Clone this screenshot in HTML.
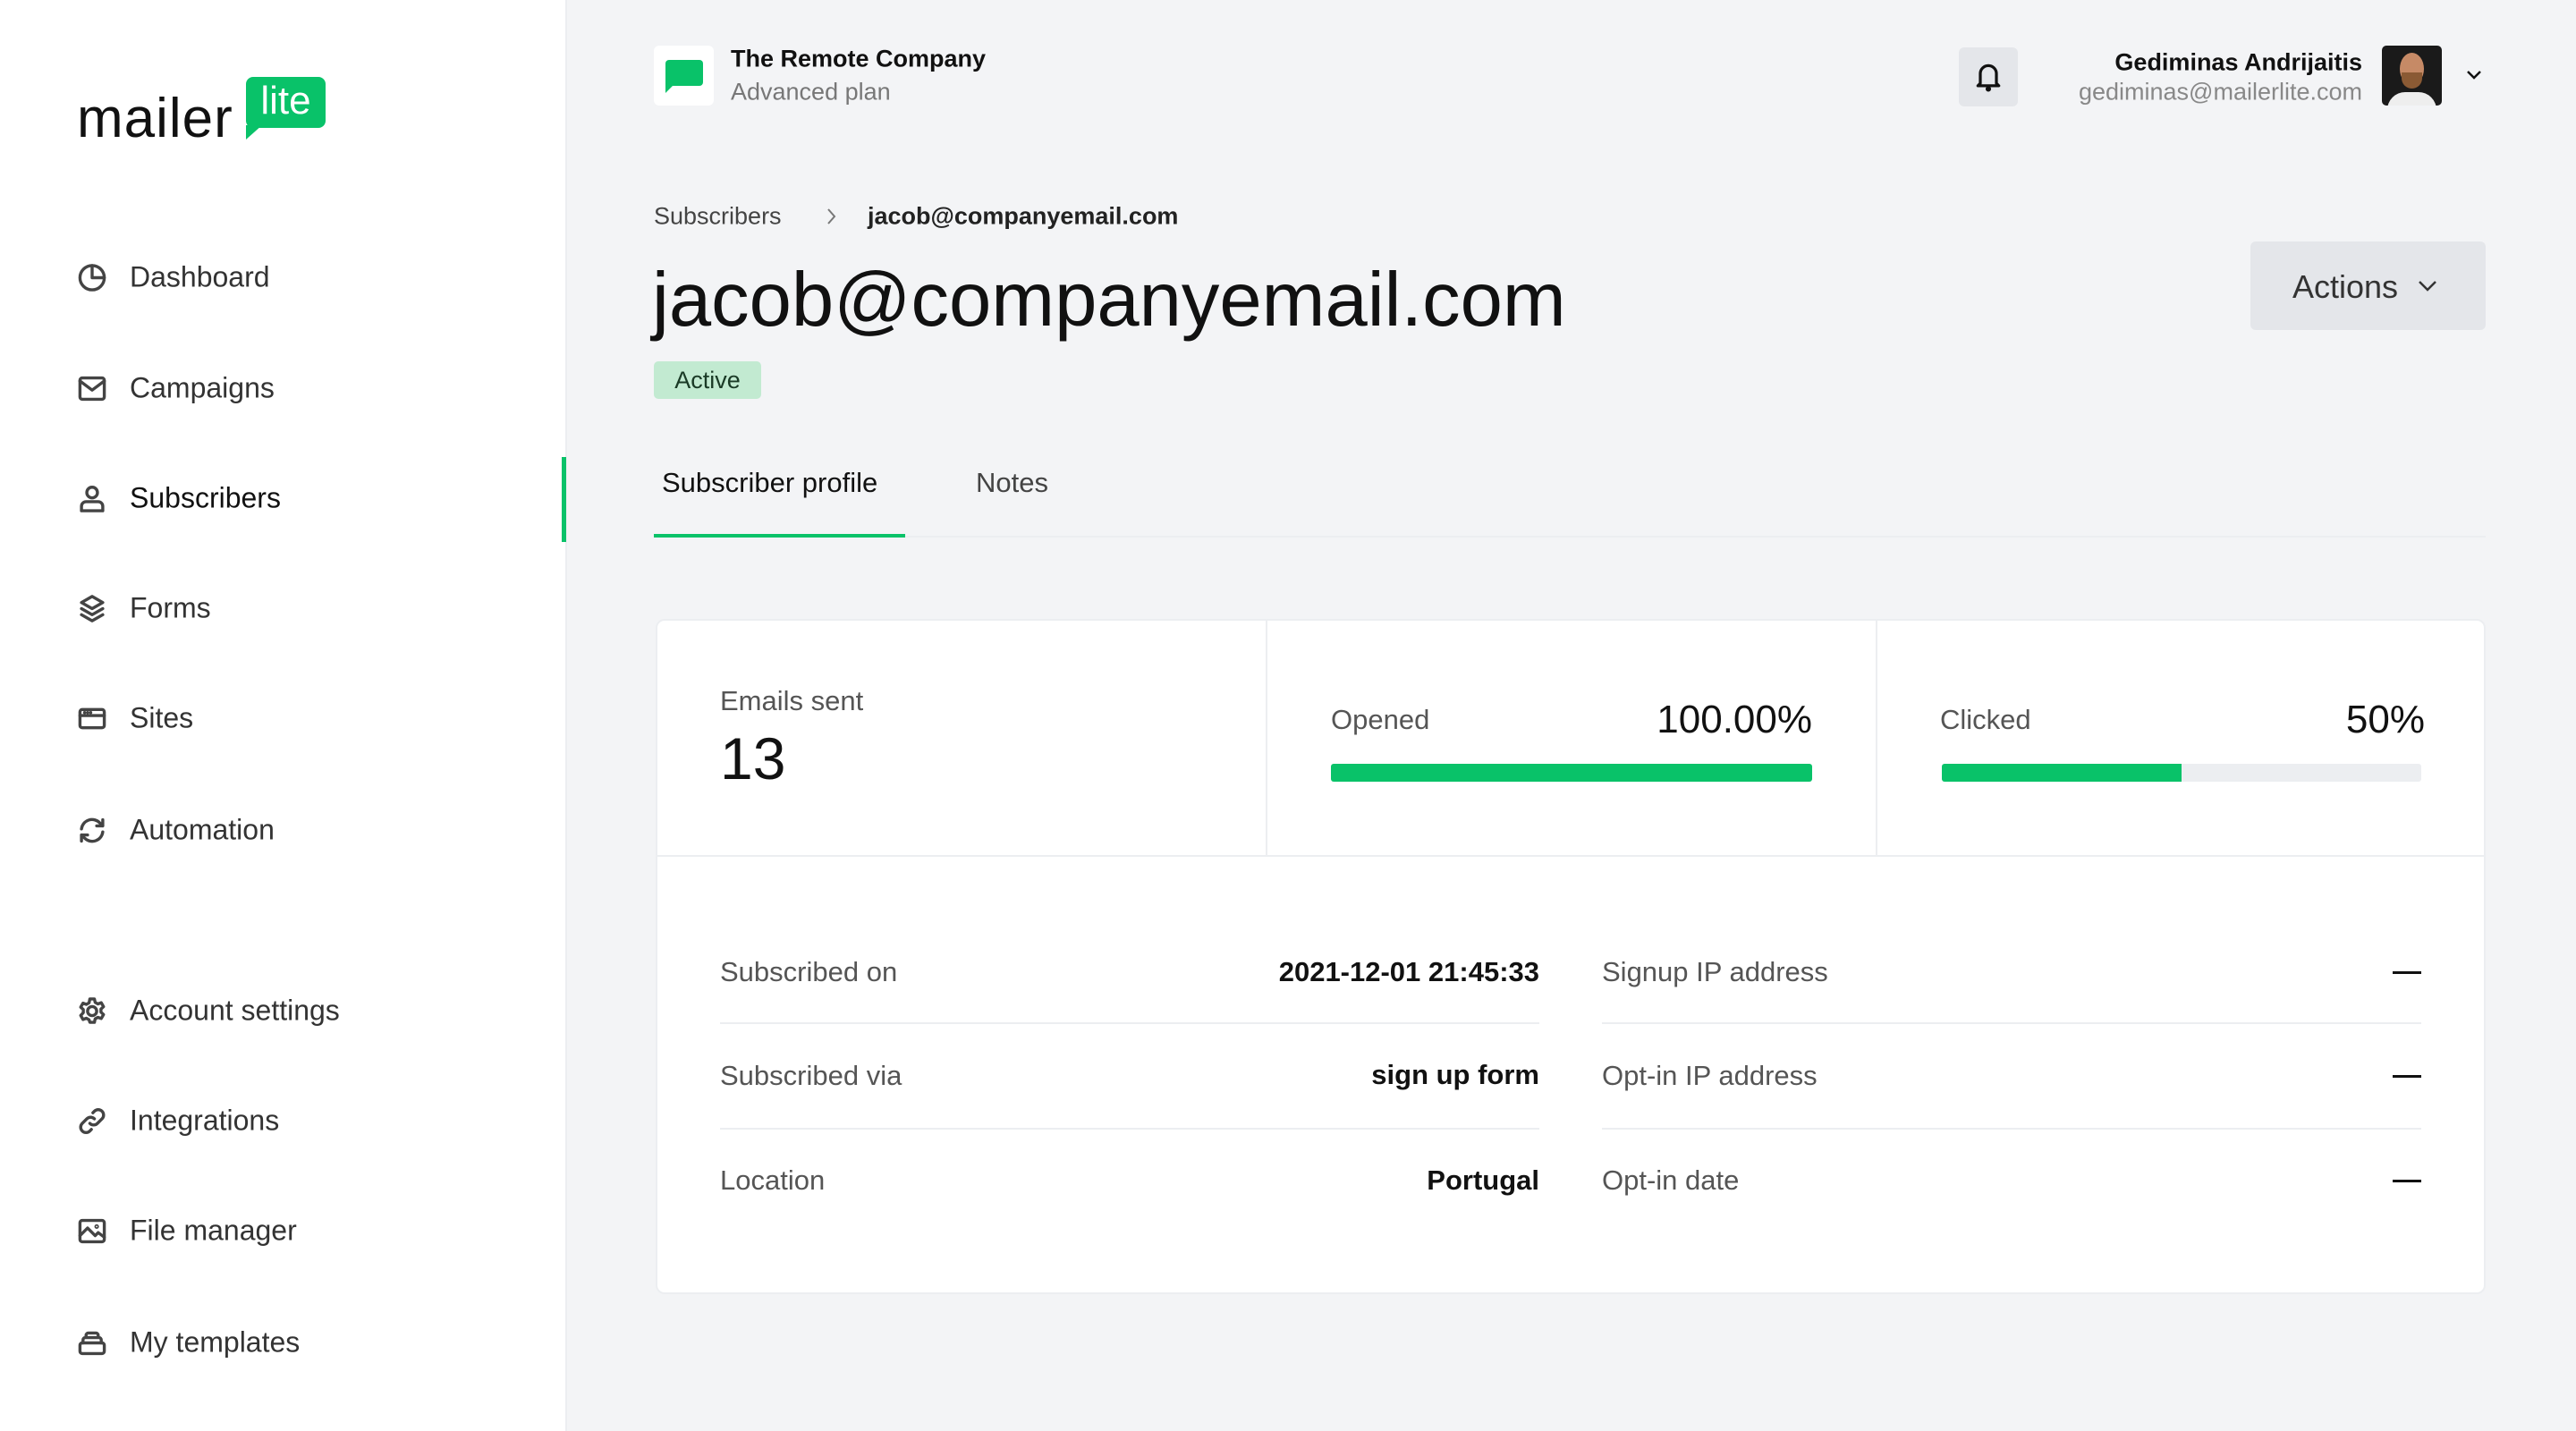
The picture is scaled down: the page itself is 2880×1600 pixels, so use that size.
<!DOCTYPE html>
<html><head><meta charset="utf-8"><style>
*{margin:0;padding:0;box-sizing:border-box}
body{width:2880px;height:1600px;background:#f3f4f6;font-family:"Liberation Sans",sans-serif;position:relative;overflow:hidden;color:#111}
.a{position:absolute;white-space:nowrap}
.c{transform:translateY(-50%)}
.side{position:absolute;left:0;top:0;width:634px;height:1600px;background:#fff;border-right:2px solid #eceef1}
.nav{position:absolute;left:86px;font-size:32px;color:#333;transform:translateY(-50%);display:flex;align-items:center}
.nav svg{width:34px;height:34px;margin-right:25px;fill:none;stroke:#444;stroke-width:2;stroke-linecap:round;stroke-linejoin:round}
.lbl{font-size:31px;color:#555}
.val{font-size:31px;color:#111;font-weight:bold;text-align:right}
.hr{position:absolute;height:2px;background:#eceef1}
</style></head><body>
<div class="side"></div>
<div class="a" style="left:86px;top:93px;font-size:62px;color:#111;letter-spacing:1px;line-height:80px">mailer</div>
<div class="a" style="left:275px;top:86px;width:89px;height:57px;background:#09c269;border-radius:8px;color:#fff;font-size:44px;text-align:center;line-height:54px">lite</div>
<svg class="a" style="left:275px;top:140px" width="20" height="18"><path d="M0 0H18L0 16Z" fill="#09c269"/></svg>
<div style="position:absolute;left:628px;top:511px;width:5px;height:95px;background:#09c269"></div>

<div class="nav" style="top:310px"><svg viewBox="0 0 20 20"><circle cx="10" cy="10" r="8"/><path d="M10 2v8h8"/></svg>Dashboard</div>
<div class="nav" style="top:434px"><svg viewBox="0 0 20 20"><rect x="2" y="3" width="16" height="14" rx="1.5"/><path d="M2 5l8 6 8-6"/></svg>Campaigns</div>
<div class="nav" style="top:557px;color:#111"><svg viewBox="0 0 20 20"><circle cx="10" cy="6" r="3.5"/><path d="M3 18v-3a3 3 0 0 1 3-3h8a3 3 0 0 1 3 3v3z"/></svg>Subscribers</div>
<div class="nav" style="top:680px"><svg viewBox="0 0 20 20"><path d="M10 2l7 4-7 4-7-4z"/><path d="M3 10l7 4 7-4"/><path d="M3 14l7 4 7-4"/></svg>Forms</div>
<div class="nav" style="top:803px"><svg viewBox="0 0 20 20"><rect x="2" y="4" width="16" height="12" rx="1.5"/><path d="M2 8h16M5 6h.1M7 6h.1M9 6h.1"/></svg>Sites</div>
<div class="nav" style="top:928px"><svg viewBox="0 0 20 20"><path d="M3 9a7 7 0 0 1 12-4l2 2M17 3v4h-4M17 11a7 7 0 0 1-12 4l-2-2M3 17v-4h4"/></svg>Automation</div>
<div class="nav" style="top:1130px"><svg viewBox="0 0 20 20"><circle cx="10" cy="10" r="3"/><path d="M8.5 2h3l.5 2.3 1.8 1 2.2-.8 1.5 2.6-1.7 1.6v2l1.7 1.6-1.5 2.6-2.2-.8-1.8 1-.5 2.3h-3L8 15.7l-1.8-1-2.2.8-1.5-2.6L4.2 11V9L2.5 7.4 4 4.8l2.2.8 1.8-1z"/></svg>Account settings</div>
<div class="nav" style="top:1253px"><svg viewBox="0 0 20 20"><path d="M8.5 11.5a3.5 3.5 0 0 0 5 0l3-3a3.5 3.5 0 0 0-5-5l-1 1M11.5 8.5a3.5 3.5 0 0 0-5 0l-3 3a3.5 3.5 0 0 0 5 5l1-1"/></svg>Integrations</div>
<div class="nav" style="top:1376px"><svg viewBox="0 0 20 20"><rect x="2" y="3" width="16" height="14" rx="1.5"/><path d="M2 13l5-5 5 5 2-2 4 3"/><circle cx="13" cy="7" r=".5"/></svg>File manager</div>
<div class="nav" style="top:1501px"><svg viewBox="0 0 20 20"><rect x="2" y="10" width="16" height="7" rx="1.5"/><path d="M4 10V8a1.5 1.5 0 0 1 1.5-1.5h9A1.5 1.5 0 0 1 16 8v2M6 6.5V5a1.5 1.5 0 0 1 1.5-1.5h5A1.5 1.5 0 0 1 14 5v1.5"/></svg>My templates</div>

<!-- header -->
<div class="a" style="left:731px;top:51px;width:67px;height:67px;background:#fff;border-radius:6px"></div>
<svg class="a" style="left:742px;top:67px" width="46" height="38"><rect x="2" y="0" width="42" height="29" rx="4" fill="#09c269"/><path d="M2 20v17l10-10z" fill="#09c269"/></svg>
<div class="a c" style="left:817px;top:66px;font-size:27px;font-weight:bold;color:#111">The Remote Company</div>
<div class="a c" style="left:817px;top:103px;font-size:27px;color:#777">Advanced plan</div>
<div class="a" style="left:2190px;top:53px;width:66px;height:66px;background:#e4e6ea;border-radius:6px"></div>
<svg class="a" style="left:2205px;top:68px" width="36" height="36" viewBox="0 0 20 20" fill="none" stroke="#111" stroke-width="1.8" stroke-linejoin="round"><path d="M5 14V8a5 5 0 0 1 10 0v6l1.5 1.5h-13z"/><circle cx="10" cy="17.5" r=".8" fill="#111"/></svg>
<div class="a c" style="right:239px;top:70px;font-size:27px;font-weight:bold;color:#111">Gediminas Andrijaitis</div>
<div class="a c" style="right:239px;top:103px;font-size:27px;color:#888">gediminas@mailerlite.com</div>
<div class="a" style="left:2663px;top:51px;width:67px;height:67px;border-radius:5px;background:#1a1a1a;overflow:hidden">
<div style="position:absolute;left:20px;top:8px;width:27px;height:36px;border-radius:50%;background:#c68a66"></div>
<div style="position:absolute;left:22px;top:30px;width:23px;height:18px;border-radius:0 0 12px 12px;background:#8a5a34"></div>
<div style="position:absolute;left:6px;top:52px;width:55px;height:30px;border-radius:20px 20px 0 0;background:#eee"></div></div>
<svg class="a" style="left:2757px;top:77px" width="18" height="14" fill="none" stroke="#111" stroke-width="2.5"><path d="M2 3l7 7 7-7"/></svg>

<!-- breadcrumb/title -->
<div class="a c" style="left:731px;top:242px;font-size:27px;color:#444">Subscribers</div>
<svg class="a" style="left:923px;top:231px" width="14" height="22" fill="none" stroke="#777" stroke-width="2"><path d="M3 3l7 8-7 8"/></svg>
<div class="a c" style="left:970px;top:242px;font-size:27px;color:#222;font-weight:bold">jacob@companyemail.com</div>
<div class="a c" style="left:729px;top:336px;font-size:85px;color:#111">jacob@companyemail.com</div>
<div class="a" style="left:731px;top:404px;width:120px;height:42px;background:#c2ead1;border-radius:5px;font-size:27px;color:#1a3a26;text-align:center;line-height:42px">Active</div>
<div class="a" style="left:2516px;top:270px;width:263px;height:99px;background:#e4e6ea;border-radius:6px"></div>
<div class="a c" style="left:2563px;top:321px;font-size:36px;color:#333">Actions</div>
<svg class="a" style="left:2702px;top:312px" width="24" height="16" fill="none" stroke="#333" stroke-width="2.5"><path d="M3 3l9 9 9-9"/></svg>

<!-- tabs -->
<div class="a c" style="left:740px;top:540px;font-size:31px;color:#111">Subscriber profile</div>
<div class="a c" style="left:1091px;top:540px;font-size:31px;color:#444">Notes</div>
<div class="hr" style="left:731px;top:599px;width:2048px"></div>
<div class="a" style="left:731px;top:597px;width:281px;height:4px;background:#09c269"></div>

<!-- card -->
<div class="a" style="left:733px;top:692px;width:2046px;height:755px;background:#fff;border:2px solid #eceef1;border-radius:10px"></div>
<div class="hr" style="left:733px;top:956px;width:2046px"></div>
<div class="a" style="left:1415px;top:692px;width:2px;height:265px;background:#eceef1"></div>
<div class="a" style="left:2097px;top:692px;width:2px;height:265px;background:#eceef1"></div>
<div class="a c lbl" style="left:805px;top:784px">Emails sent</div>
<div class="a c" style="left:805px;top:848px;font-size:66px;color:#111">13</div>
<div class="a c lbl" style="left:1488px;top:805px">Opened</div>
<div class="a c" style="right:854px;top:805px;font-size:44px;color:#111">100.00%</div>
<div class="a" style="left:1488px;top:854px;width:538px;height:20px;background:#09c269;border-radius:3px"></div>
<div class="a c lbl" style="left:2169px;top:805px">Clicked</div>
<div class="a c" style="right:169px;top:805px;font-size:44px;color:#111">50%</div>
<div class="a" style="left:2171px;top:854px;width:536px;height:20px;background:#eceef1;border-radius:3px"></div>
<div class="a" style="left:2171px;top:854px;width:268px;height:20px;background:#09c269;border-radius:3px 0 0 3px"></div>

<div class="a c lbl" style="left:805px;top:1087px">Subscribed on</div>
<div class="a c val" style="right:1159px;top:1087px">2021-12-01 21:45:33</div>
<div class="a c lbl" style="left:1791px;top:1087px">Signup IP address</div>
<div class="a" style="left:2675px;top:1086px;width:32px;height:3px;background:#111"></div>
<div class="hr" style="left:805px;top:1143px;width:916px"></div>
<div class="hr" style="left:1791px;top:1143px;width:916px"></div>
<div class="a c lbl" style="left:805px;top:1203px">Subscribed via</div>
<div class="a c val" style="right:1159px;top:1202px">sign up form</div>
<div class="a c lbl" style="left:1791px;top:1203px">Opt-in IP address</div>
<div class="a" style="left:2675px;top:1202px;width:32px;height:3px;background:#111"></div>
<div class="hr" style="left:805px;top:1261px;width:916px"></div>
<div class="hr" style="left:1791px;top:1261px;width:916px"></div>
<div class="a c lbl" style="left:805px;top:1320px">Location</div>
<div class="a c val" style="right:1159px;top:1320px">Portugal</div>
<div class="a c lbl" style="left:1791px;top:1320px">Opt-in date</div>
<div class="a" style="left:2675px;top:1319px;width:32px;height:3px;background:#111"></div>
</body></html>
